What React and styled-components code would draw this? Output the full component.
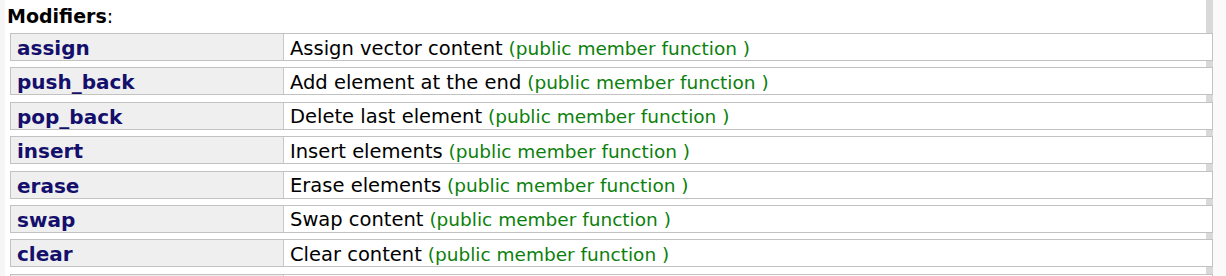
import React from "react";
import styled, { createGlobalStyle } from "styled-components";

const Global = createGlobalStyle`
  html, body { margin: 0; padding: 0; background: #fafafa; }
  body { font-family: "DejaVu Sans", Verdana, sans-serif; overflow: hidden; }
`;

const Page = styled.div`
  width: 1201px;
  padding-left: 5px;
  background: #fff;
  border-right: 7px solid #d9d9d9;
  min-height: 276px;
  box-shadow: inset 5px 0 0 #f6f6f6;
`;

const Heading = styled.h3`
  margin: 0;
  padding: 5px 0 0 2px;
  height: 29px;
  box-sizing: border-box;
  font-size: 19px;
  font-weight: bold;
  color: #000;
  line-height: 22px;
`;

const Colon = styled.span`
  font-weight: normal;
`;

const List = styled.div`
  display: flex;
  flex-direction: column;
  gap: 6.4px;
  margin-left: 5px;
  margin-right: -7px;
  padding-top: 4px;
`;

const Row = styled.div`
  display: grid;
  grid-template-columns: 273px 1fr;
  height: 28px;
  box-sizing: border-box;
  border: 1px solid #c2c2c2;
  background: #fff;
`;

const Name = styled.div`
  background: #efefef;
  border-right: 1px solid #c8c8c8;
  padding: 2px 0 0 6px;
  display: flex;
  align-items: center;
  font-weight: bold;
  font-size: 20px;
  color: #140f6c;
`;

const Desc = styled.div`
  padding: 2px 0 0 6px;
  display: flex;
  align-items: center;
  font-size: 19.5px;
  color: #000;
  white-space: pre;
`;

const Kind = styled.span`
  color: #0b800b;
  font-size: 18.5px;
`;

const members = [
  ["assign", "Assign vector content"],
  ["push_back", "Add element at the end"],
  ["pop_back", "Delete last element"],
  ["insert", "Insert elements"],
  ["erase", "Erase elements"],
  ["swap", "Swap content"],
  ["clear", "Clear content"],
  ["", ""],
];

export default function App() {
  return (
    <>
      <Global />
      <Page>
        <Heading>
          Modifiers<Colon>:</Colon>
        </Heading>
        <List>
          {members.map(([name, desc], i) => (
            <Row key={i}>
              <Name>{name}</Name>
              <Desc>
                {desc}
                {desc && <Kind> (public member function )</Kind>}
              </Desc>
            </Row>
          ))}
        </List>
      </Page>
    </>
  );
}
